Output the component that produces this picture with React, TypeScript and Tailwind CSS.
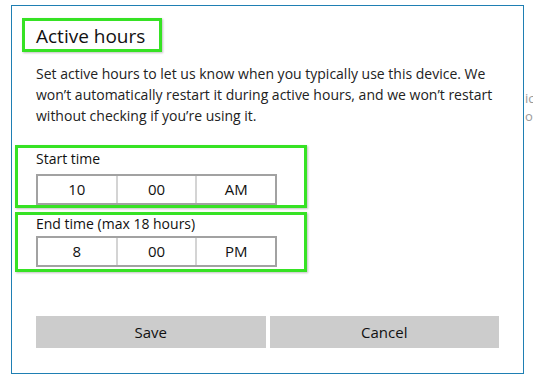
const font = { fontFamily: '"Open Sans", "Noto Sans", sans-serif' };

function TimePicker({ values }: { values: string[] }) {
  return (
    <div className="ml-[18px] flex h-[31px] w-[241px] border-2 border-[#a2a2a2] bg-white">
      {values.map((v, i) => (
        <div
          key={i}
          className={
            "flex flex-1 items-center justify-center text-[15px] text-[#111] " +
            (i > 0 ? "border-l-2 border-[#d4d4d4]" : "")
          }
        >
          {v}
        </div>
      ))}
    </div>
  );
}

export default function App() {
  return (
    <div className="flex h-[382px] w-[533px] overflow-hidden bg-white" style={font}>
      <div className="ml-[11px] mt-[5px] flex h-[369px] w-[513px] shrink-0 flex-col border border-[#1f7fb3] bg-white">
        <div className="ml-[10px] mt-[12px] flex h-[34px] w-[140px] items-center border-[3px] border-[#36e224] pl-[11px] pt-[2px] shadow-[1px_1px_2px_rgba(0,0,0,0.25)]">
          <span className="text-[19px] leading-none text-[#111]">Active hours</span>
        </div>

        <p className="ml-[24px] mt-[11px] text-[14px] leading-[21px] text-[#222]">
          Set active hours to let us know when you typically use this device. We
          <br />
          won’t automatically restart it during active hours, and we won’t restart
          <br />
          without checking if you’re using it.
        </p>

        <div className="ml-[3px] mt-[19px] flex h-[63px] w-[292px] flex-col border-[3px] border-[#36e224] pt-[1px] shadow-[1px_1px_2px_rgba(0,0,0,0.25)]">
          <div className="ml-[18px] text-[14px] leading-[20px] text-[#111]">Start time</div>
          <div className="mt-[5px]">
            <TimePicker values={["10", "00", "AM"]} />
          </div>
        </div>

        <div className="ml-[3px] mt-[4px] flex h-[60px] w-[292px] flex-col border-[3px] border-[#36e224] shadow-[1px_1px_2px_rgba(0,0,0,0.25)]">
          <div className="ml-[18px] -mt-[1px] text-[14px] leading-[20px] text-[#111]">End time (max 18 hours)</div>
          <div className="mt-[2px]">
            <TimePicker values={["8", "00", "PM"]} />
          </div>
        </div>

        <div className="ml-[24px] mt-[44px] flex w-[463px] gap-[4px]">
          <button className="h-[32px] flex-1 bg-[#cccccc] text-[15px] text-[#111]">Save</button>
          <button className="h-[32px] flex-1 bg-[#cccccc] text-[15px] text-[#111]">Cancel</button>
        </div>
      </div>

      <div className="ml-[1px] mt-[89px] flex flex-col text-[13px] leading-[18px] text-[#9a9a9a]">
        <span>ic</span>
        <span>os</span>
      </div>
    </div>
  );
}
